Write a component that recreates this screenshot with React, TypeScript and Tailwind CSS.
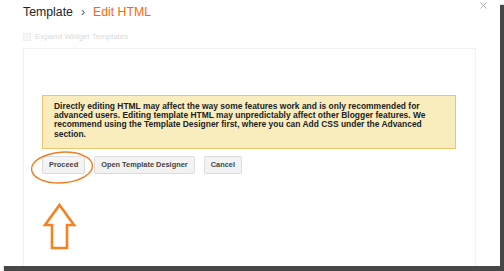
import React from 'react';

const font = { fontFamily: '"Liberation Sans", Arial, sans-serif' };

// Annotation marks drawn over the screenshot
const Annotations = () => (
    <svg className="absolute inset-0 pointer-events-none" width="504" height="271" viewBox="0 0 504 271">
        <ellipse cx="62" cy="167.5" rx="30.5" ry="15.3" fill="none" stroke="#f47b20" strokeWidth="1.4" transform="rotate(-4 62 167.5)" />
        <polygon
            points="59.5,205 74,225 67,225 67,248 52,248 52,225 45,225"
            fill="#ffffff"
            stroke="#f7811f"
            strokeWidth="2.6"
            strokeLinejoin="miter"
        />
    </svg>
);

const Btn = ({ children }: { children: React.ReactNode }) => (
    <button className="h-[18px] px-[6px] border border-[#dcdcdc] rounded-[2px] bg-gradient-to-b from-[#f5f5f5] to-[#f1f1f1] text-[7.4px] font-bold text-[#444] leading-none">
        {children}
    </button>
);

export default function App() {
    return (
        <div className="relative w-[504px] h-[271px] bg-white overflow-hidden" style={font}>
            <div className="w-[500px] h-[266px] bg-white flex flex-col shadow-[4px_5px_1px_rgba(0,0,0,0.72)]">
                {/* Header */}
                <div className="relative h-[32px] pl-[23px] pt-[5px]">
                    <div className="flex items-center text-[12.3px] leading-[14px]">
                        <span className="text-[#222]">Template</span>
                        <span className="text-[#555] mx-[8px]">›</span>
                        <span className="text-[#f60]">Edit HTML</span>
                    </div>
                    <svg className="absolute right-[13px] top-[2px]" width="7" height="7" viewBox="0 0 7 7">
                        <path d="M0.5 0.5 L6.5 6.5 M6.5 0.5 L0.5 6.5" stroke="#b5b5b5" strokeWidth="1" />
                    </svg>
                </div>

                {/* Expand widget templates (disabled) */}
                <div className="flex items-center h-[10px] pl-[23px] gap-[4px]">
                    <div className="w-[8px] h-[8px] border border-[#ececec] bg-[#f6f6f6]" />
                    <span className="text-[8.05px] leading-[10px] text-[#dadada]">Expand Widget Templates</span>
                </div>

                {/* Editor panel */}
                <div className="ml-[23px] mt-[6px] w-[453px] flex-1 border-t border-x border-[#f1f1f1] pl-[18px] pt-[46px]">
                    <div className="w-[414px] border border-[#f0c36d] bg-[#f9edbe] pl-[11px] pr-[10px] pt-[6px] pb-[9px] text-[8.45px] leading-[9.2px] font-bold text-[#222]">
                        Directly editing HTML may affect the way some features work and is only recommended for advanced users. Editing template HTML may unpredictably affect other Blogger features. We recommend using the Template Designer first, where you can Add CSS under the Advanced section.
                    </div>
                    <div className="flex gap-[9px] mt-[7px]">
                        <Btn>Proceed</Btn>
                        <Btn>Open Template Designer</Btn>
                        <Btn>Cancel</Btn>
                    </div>
                </div>
            </div>
            <Annotations />
        </div>
    );
}
